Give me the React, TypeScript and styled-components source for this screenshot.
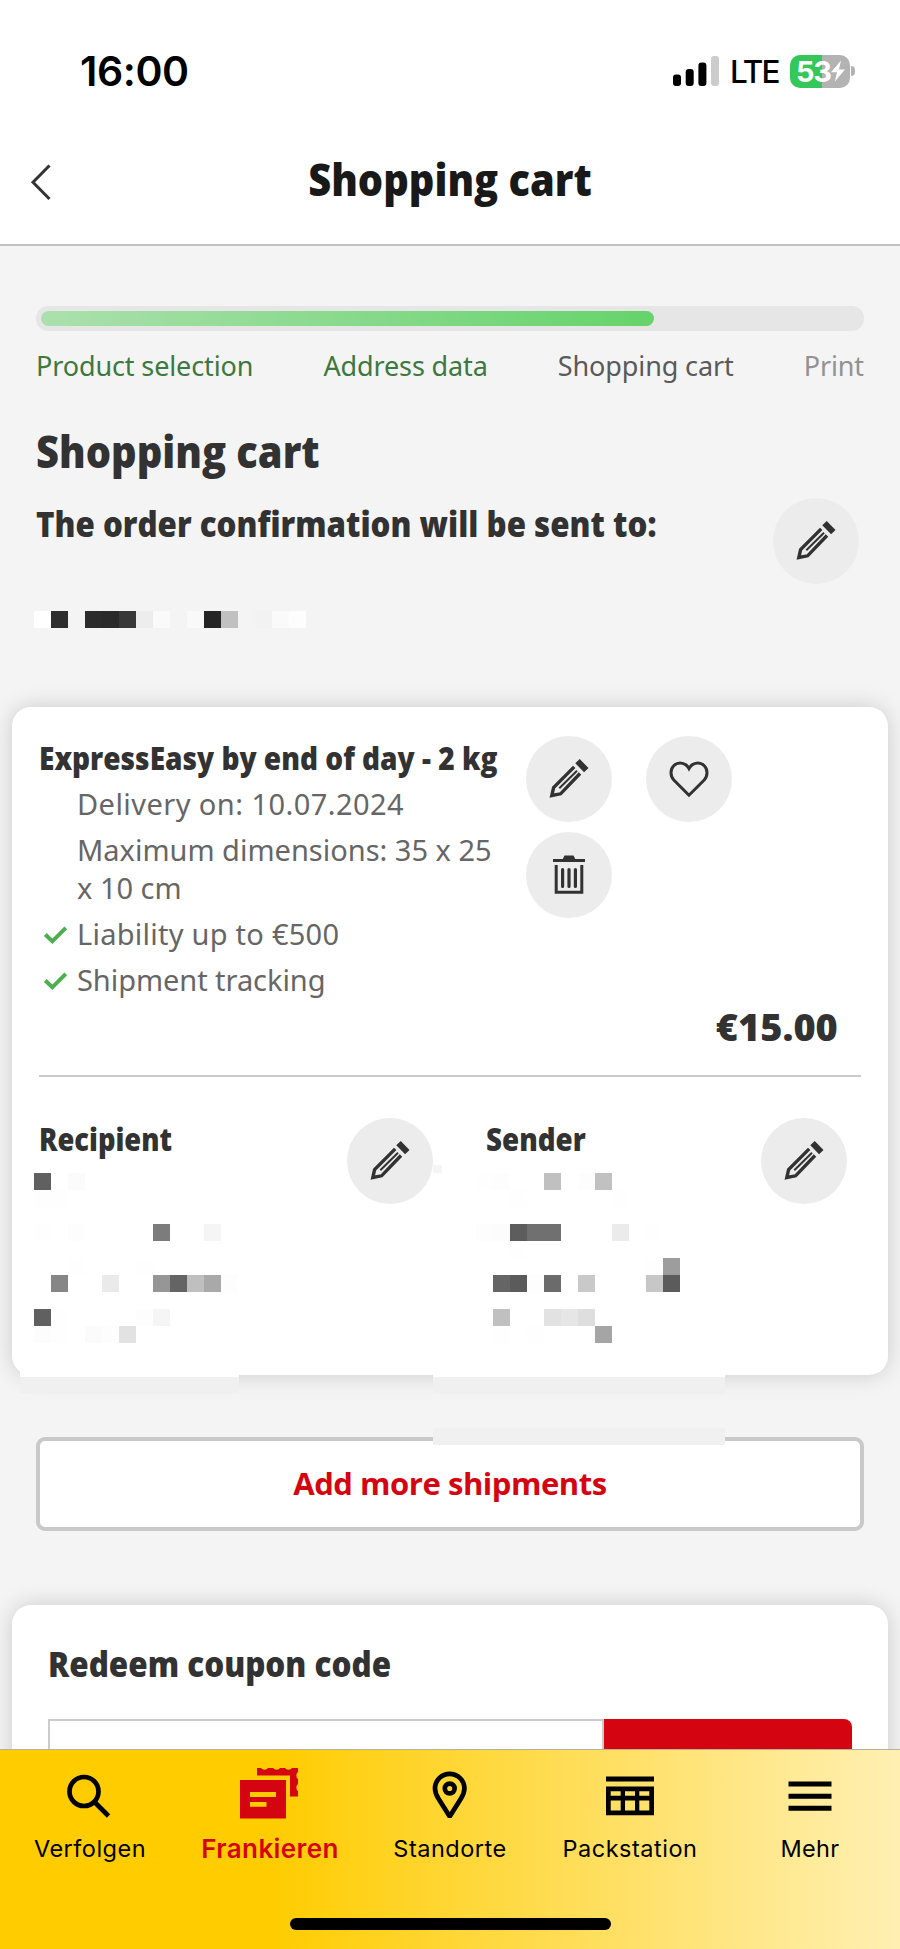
import React from 'react';
import styled, { createGlobalStyle } from 'styled-components';

const GlobalStyle = createGlobalStyle`
  * { box-sizing: border-box; }
  body { margin: 0; background: #f4f4f4; }
  h1, h2, h3, p, ul { margin: 0; padding: 0; }
  button { border: 0; padding: 0; font: inherit; cursor: pointer; }
`;

const ink = '#323232';
const red = '#d40511';

const Page = styled.div`
  display: flex;
  flex-direction: column;
  width: 900px;
  height: 1949px;
  overflow: hidden;
  background: #f4f4f4;
  color: ${ink};
  font-family: 'Noto Sans', 'Open Sans', sans-serif;
`;

const Header = styled.header`
  flex: none;
  background: #fff;
  border-bottom: 2px solid #c2c2c2;
`;

const StatusBar = styled.div`
  display: flex;
  justify-content: space-between;
  height: 120px;
  padding: 47px 45px 0 80px;
  color: #000;
  font-family: Inter, sans-serif;
`;

const Clock = styled.span`
  font-size: 41px;
  font-weight: 600;
  line-height: 48px;
  letter-spacing: -0.4px;
`;

const StatusIcons = styled.div`
  display: flex;
  align-items: center;
  height: 48px;
`;

const Network = styled.span`
  width: 49px;
  margin: 2px 11px 0 10px;
  font-size: 31.5px;
  font-weight: 500;
  line-height: 40px;
  letter-spacing: -2px;
`;

const Battery = styled.div`
  display: flex;
  align-items: center;
  width: 60px;
  height: 33px;
  padding-left: 6px;
  border-radius: 10px;
  background: linear-gradient(90deg, #34c759 0 32px, #b3b3b3 32px);
  color: #fff;
  font-size: 29px;
  font-weight: 700;
  letter-spacing: -1.4px;
`;

const BatteryTip = styled.i`
  width: 4px;
  height: 10px;
  margin-left: 1px;
  border-radius: 0 5px 5px 0;
  background: #b3b3b3;
`;

const TitleBar = styled.div`
  display: grid;
  grid-template-columns: 80px 1fr 80px;
  align-items: center;
  height: 124px;
`;

const BackButton = styled.button`
  display: flex;
  width: 80px;
  padding-left: 28px;
  background: none;
`;

const Heading = styled.h2<{ $size: number; $line: number; $condense?: number }>`
  font-family: 'Open Sans', 'Noto Sans', sans-serif;
  font-size: ${p => p.$size}px;
  font-weight: 800;
  line-height: ${p => p.$line}px;
  white-space: nowrap;
  transform: scaleX(${p => p.$condense ?? 0.885});
  transform-origin: left center;
`;

const ScreenTitle = styled(Heading)`
  padding-bottom: 6px;
  color: #191919;
  text-align: center;
  transform-origin: center;
`;

const Main = styled.main`
  flex: 1;
  min-height: 0;
  overflow: hidden;
  padding: 60px 12px 0;
`;

const Section = styled.section`
  padding: 0 24px;
`;

const ProgressTrack = styled.div`
  height: 25px;
  padding: 5px;
  border-radius: 12px;
  background: #e6e6e6;
`;

const ProgressFill = styled.div`
  width: 613px;
  height: 15px;
  border-radius: 8px;
  background: linear-gradient(90deg, #abe0ad, #66d36b);
`;

const Steps = styled.div`
  display: flex;
  justify-content: space-between;
  margin-top: 17px;
  font-size: 27px;
  line-height: 36px;
`;

const Step = styled.span<{ $state: 'done' | 'current' | 'next' }>`
  color: ${p => ({ done: '#3c7840', current: '#5a5a5a', next: '#929292' })[p.$state]};
  letter-spacing: -0.12px;
`;

const PageTitle = styled(Heading)`
  margin-top: 40px;
`;

const Confirmation = styled.div`
  display: flex;
  justify-content: space-between;
  margin-top: 20px;
  padding-right: 5px;
`;

const RoundButton = styled.button`
  display: grid;
  place-items: center;
  flex: none;
  width: 86px;
  height: 86px;
  border-radius: 50%;
  background: #ececec;
  color: ${ink};
`;

const MosaicGrid = styled.div<{ $left: number; $top: number }>`
  display: grid;
  grid-auto-rows: 17px;
  margin: ${p => p.$top}px 0 0 ${p => p.$left}px;
`;

const MosaicRow = styled.div`
  display: flex;
`;

const MosaicCell = styled.span<{ $tone: string }>`
  width: 17px;
  height: 17px;
  background: ${p => p.$tone};
`;

const Card = styled.section<{ $height: number; $top: number; $padding: string }>`
  position: relative;
  height: ${p => p.$height}px;
  margin-top: ${p => p.$top}px;
  padding: ${p => p.$padding};
  border-radius: 19px;
  background: #fff;
  box-shadow: 0 0 22px rgba(0, 0, 0, 0.17);
`;

const Product = styled.div`
  display: grid;
  grid-template-columns: 487px 1fr;
  height: 266px;
`;

const Features = styled.ul`
  display: flex;
  flex-direction: column;
  gap: 7.6px;
  width: 460px;
  margin-top: 5px;
  color: #666;
  font-size: 29px;
  line-height: 38.4px;
  list-style: none;
`;

const Feature = styled.li<{ $spacing: number }>`
  display: flex;
  padding-left: 4px;
  letter-spacing: ${p => p.$spacing}px;
`;

const FeatureMark = styled.span`
  display: flex;
  flex: none;
  width: 34px;
  padding-top: 8px;
`;

const Actions = styled.div`
  display: grid;
  grid-template-columns: 86px 86px;
  align-content: start;
  gap: 10px 34px;
`;

const Price = styled(Heading)`
  padding-right: 23px;
  text-align: right;
  transform-origin: right center;
`;

const Divider = styled.hr`
  height: 2px;
  margin: 23px 0 41px;
  border: 0;
  background: #cacaca;
`;

const Addresses = styled.div`
  display: grid;
  grid-template-columns: 447px 1fr;
`;

const Address = styled.div<{ $width: number }>`
  display: flex;
  justify-content: space-between;
  width: ${p => p.$width}px;
`;

const Patch = styled.i<{ $x: number; $y: number; $w: number; $h: number; $tone: string }>`
  position: absolute;
  left: ${p => p.$x}px;
  top: ${p => p.$y}px;
  width: ${p => p.$w}px;
  height: ${p => p.$h}px;
  background: ${p => p.$tone};
  z-index: 1;
`;

const AddButton = styled.button`
  display: block;
  width: 828px;
  height: 94px;
  margin: 62px 24px 0;
  padding-bottom: 3px;
  border: 4.5px solid #c9c9c9;
  border-radius: 9px;
  background: #fff;
  color: ${red};
  font-family: 'Open Sans', 'Noto Sans', sans-serif;
  font-size: 31px;
  font-weight: 700;
  letter-spacing: -0.45px;
`;

const CouponForm = styled.div`
  display: flex;
  height: 90px;
  margin-top: 32px;
`;

const CouponInput = styled.div`
  width: 556px;
  border: 2px solid #cbcbcb;
  background: #fff;
`;

const CouponSubmit = styled.button`
  width: 248px;
  border-radius: 0 8px 8px 0;
  background: ${red};
`;

const NavBar = styled.nav`
  display: flex;
  flex-direction: column;
  align-items: center;
  flex: none;
  height: 200px;
  border-top: 1px solid #b9b098;
  background: linear-gradient(90deg, #fc0 0%, #fc0 30%, #ffe57f 79%, #fff0b2 100%);
  font-family: Inter, sans-serif;
  z-index: 2;
`;

const Tabs = styled.div`
  display: grid;
  grid-template-columns: repeat(5, 180px);
  height: 168px;
`;

const Tab = styled.div<{ $active?: boolean }>`
  display: flex;
  flex-direction: column;
  align-items: center;
  padding-top: 12px;
  color: ${p => (p.$active ? red : '#000')};
`;

const TabLabel = styled.span<{ $active?: boolean; $spacing: number }>`
  margin-top: 16px;
  font-size: ${p => (p.$active ? 26 : 23.5)}px;
  font-weight: ${p => (p.$active ? 600 : 400)};
  line-height: 30px;
  letter-spacing: ${p => p.$spacing}px;
`;

const HomeIndicator = styled.div`
  width: 321px;
  height: 12px;
  border-radius: 6px;
  background: #000;
`;

const PencilIcon = () => (
  <svg width="40" height="40" viewBox="0 0 40 40" fill="none" stroke="currentColor">
    <path d="M25.2 7.900 4.600 28.600 2.800 36.500 11.600 34.800 31 14.500" strokeWidth="3.400" />
    <path d="M28 11.700 10.300 29.300" strokeWidth="2" />
    <path d="M28.500 2.200 37.300 11.200" strokeWidth="6.200" />
  </svg>
);

const HeartIcon = () => (
  <svg width="40" height="40" viewBox="0 0 40 40" fill="none" stroke="currentColor" strokeWidth="3">
    <path d="M20 36.200 4.800 21C2.300 18.500 2 16 2 13.500 2 8 6.300 4 11 4c4 0 7 2 9 5.600C22 6 25 4 29 4c4.700 0 9 4 9 9.500 0 2.500-.3 5-2.800 7.500Z" />
  </svg>
);

const TrashIcon = () => (
  <svg width="34" height="40" viewBox="0 0 34 40" fill="none" stroke="currentColor">
    <path d="M1 5.500H33" strokeWidth="3" />
    <path d="M10.500 4.500 12.500.500h9l2 4Z" fill="currentColor" stroke="none" />
    <path d="M4.200 10V37.200H29.800V10" strokeWidth="3" />
    <path d="M10.600 14.500V31.500M17 14.500V31.500M23.400 14.500V31.500" strokeWidth="3.200" strokeLinecap="round" />
  </svg>
);

const CheckIcon = () => (
  <svg width="26" height="24" viewBox="0 0 26 24" fill="none" stroke="#4caf50" strokeWidth="4">
    <path d="M2.300 11.500 9.300 18.300 22.800 4.800" />
  </svg>
);

const BackIcon = () => (
  <svg width="24" height="40" viewBox="0 0 24 40" fill="none" stroke={ink} strokeWidth="3">
    <path d="M21.500 3.500 5 20.200 21.500 37" />
  </svg>
);

const SignalIcon = () => (
  <svg width="48" height="32" viewBox="0 0 48 32">
    <rect x="1" y="19.500" width="8" height="11.500" rx="3" />
    <rect x="13.700" y="14" width="8" height="17" rx="3" />
    <rect x="26.400" y="7.500" width="8" height="23.500" rx="3" />
    <rect x="39" y="1" width="8" height="30" rx="3" fill="#ccc" />
  </svg>
);

const BoltIcon = () => (
  <svg width="16" height="22" viewBox="0 0 16 22" fill="#fff">
    <path d="M11 .5 1 12.300h6L4.800 21.500 15 9.500H9Z" />
  </svg>
);

const SearchIcon = () => (
  <svg width="48" height="56" viewBox="0 0 48 56" fill="none" stroke="currentColor" strokeWidth="4.700">
    <circle cx="18" cy="29.500" r="14.500" />
    <path d="m28.500 40 14 14" />
  </svg>
);

const FrankingIcon = () => (
  <svg width="60" height="56" viewBox="0 0 60 56" fill="currentColor" overflow="visible">
    <path d="M0 18h46v38.500H0zM10 30v5h26v-5zM10 40v4.800h16.500V40z" fillRule="evenodd" />
    <path d="M17 6h4a4 3.200 0 0 0 7 0h5a4 3.200 0 0 0 7 0h5a4 3.200 0 0 0 7 0h6v4a3.200 4 0 0 0 0 7v5a3.200 4 0 0 0 0 7v5.500h-8V13.500H17Z" />
  </svg>
);

const PinIcon = () => (
  <svg width="48" height="56" viewBox="0 0 48 56" fill="none" stroke="currentColor" strokeWidth="4.700">
    <path d="M23.700 54.500 12.400 36.500C10 32.600 9 30 9 26.500a14.700 14.700 0 0 1 29.400 0c0 3.500-1 6.100-3.400 10Z" />
    <circle cx="23.700" cy="26.500" r="4.900" />
  </svg>
);

const LockerIcon = () => (
  <svg width="50" height="56" viewBox="0 0 50 56" fill="currentColor">
    <path d="M1 14.500h48v5H1z" />
    <path d="M1 24.500h48v28.800H1zM5.700 29.200v4.600h10v-4.600zM20 29.200v4.600h10v-4.600zM34.300 29.200v4.600h10v-4.600zM5.700 38.500v10h10v-10zM20 38.500v10h10v-10zM34.300 38.500v10h10v-10z" fillRule="evenodd" />
  </svg>
);

const MenuIcon = () => (
  <svg width="44" height="56" viewBox="0 0 44 56" fill="currentColor">
    <path d="M.5 19.500h43v5H.5zM.5 31.700h43v5H.5zM.5 43.800h43v5H.5z" />
  </svg>
);

type Cells = Record<number, string>;

const Mosaic = ({ rows, cols, left, top }: { rows: Cells[]; cols: number; left: number; top: number }) => (
  <MosaicGrid $left={left} $top={top} aria-hidden>
    {rows.map((row, y) => (
      <MosaicRow key={y}>
        {Array.from({ length: cols }, (_, x) => (
          <MosaicCell key={x} $tone={row[x] ?? 'transparent'} />
        ))}
      </MosaicRow>
    ))}
  </MosaicGrid>
);

const emailCells: Cells[] = [
  {
    0: '#fff', 1: '#2e2e2e', 3: '#2c2c2c', 4: '#2a2a2a', 5: '#383838', 6: '#ededed', 7: '#fafafa',
    9: '#f9f9f9', 10: '#252525', 11: '#c0c0c0', 13: '#f2f2f2', 14: '#fafafa', 15: '#fdfdfd',
  },
];

const recipientCells: Cells[] = [
  { 0: '#606060', 2: '#fbfbfb' },
  { 0: '#fefefe', 1: '#fefefe' },
  {},
  { 0: '#fefefe', 2: '#fdfdfd', 7: '#7c7c7c', 10: '#f5f5f5' },
  {},
  { 2: '#fefefe', 6: '#fefefe' },
  { 1: '#868686', 4: '#eaeaea', 7: '#969696', 8: '#646464', 9: '#bfbfbf', 10: '#a9a9a9', 11: '#fdfdfd' },
  {},
  { 0: '#606060', 1: '#fefefe', 6: '#fdfdfd', 7: '#f5f5f5' },
  { 0: '#fcfcfc', 1: '#fefefe', 3: '#fbfbfb', 4: '#fdfdfd', 5: '#e2e2e2' },
];

const senderCells: Cells[] = [
  { 0: '#fefefe', 1: '#fdfdfd', 4: '#c0c0c0', 6: '#fdfdfd', 7: '#c1c1c1' },
  { 2: '#fefefe', 8: '#fefefe' },
  {},
  { 0: '#fdfdfd', 1: '#fcfcfc', 2: '#5d5d5d', 3: '#707070', 4: '#707070', 8: '#ebebeb', 10: '#fefefe' },
  { 2: '#fefefe' },
  { 10: '#fefefe', 11: '#9d9d9d' },
  { 1: '#656565', 2: '#5b5b5b', 3: '#fdfdfd', 4: '#6b6b6b', 6: '#c9c9c9', 10: '#c7c7c7', 11: '#5b5b5b' },
  {},
  { 1: '#c0c0c0', 4: '#e2e2e2', 5: '#e6e6e6', 6: '#dedede' },
  { 1: '#fefefe', 3: '#fefefe', 7: '#a5a5a5' },
];

const features = [
  { text: 'Delivery on: 10.07.2024', spacing: 0.44 },
  { text: 'Maximum dimensions: 35 x 25 x 10 cm', spacing: 0 },
  { text: 'Liability up to €500', spacing: 0.25, included: true },
  { text: 'Shipment tracking', spacing: -0.05, included: true },
];

const tabs = [
  { label: 'Verfolgen', icon: <SearchIcon />, spacing: 0.5 },
  { label: 'Frankieren', icon: <FrankingIcon />, spacing: 0.4, active: true },
  { label: 'Standorte', icon: <PinIcon />, spacing: 0.5 },
  { label: 'Packstation', icon: <LockerIcon />, spacing: 0.5 },
  { label: 'Mehr', icon: <MenuIcon />, spacing: 0.3 },
];

export default function App() {
  return (
    <Page>
      <GlobalStyle />
      <Header>
        <StatusBar>
          <Clock>16:00</Clock>
          <StatusIcons>
            <SignalIcon />
            <Network>LTE</Network>
            <Battery>
              53
              <BoltIcon />
            </Battery>
            <BatteryTip />
          </StatusIcons>
        </StatusBar>
        <TitleBar>
          <BackButton aria-label="Back">
            <BackIcon />
          </BackButton>
          <ScreenTitle as="h1" $size={45} $line={54}>Shopping cart</ScreenTitle>
        </TitleBar>
      </Header>

      <Main>
        <Section>
          <ProgressTrack>
            <ProgressFill />
          </ProgressTrack>
          <Steps>
            <Step $state="done">Product selection</Step>
            <Step $state="done">Address data</Step>
            <Step $state="current">Shopping cart</Step>
            <Step $state="next">Print</Step>
          </Steps>
          <PageTitle $size={45} $line={54}>Shopping cart</PageTitle>
          <Confirmation>
            <Heading as="h3" $size={35.5} $line={50} $condense={0.881}>The order confirmation will be sent to:</Heading>
            <RoundButton aria-label="Edit e-mail"><PencilIcon /></RoundButton>
          </Confirmation>
          <Mosaic rows={emailCells} cols={16} left={-2} top={27} />
        </Section>

        <Card $height={668} $top={79} $padding="29px 27px 0">
          <Product>
            <div>
              <Heading as="h3" $size={31} $line={44} $condense={0.905}>ExpressEasy by end of day - 2 kg</Heading>
              <Features>
                {features.map(f => (
                  <Feature key={f.text} $spacing={f.spacing}>
                    <FeatureMark>{f.included && <CheckIcon />}</FeatureMark>
                    <span>{f.text}</span>
                  </Feature>
                ))}
              </Features>
            </div>
            <Actions>
              <RoundButton aria-label="Edit"><PencilIcon /></RoundButton>
              <RoundButton aria-label="Favourite"><HeartIcon /></RoundButton>
              <RoundButton aria-label="Delete"><TrashIcon /></RoundButton>
            </Actions>
          </Product>
          <Price as="p" $size={37.5} $line={50} $condense={1.01}>€15.00</Price>
          <Divider />
          <Addresses>
            <div>
              <Address $width={394}>
                <Heading as="h3" $size={31} $line={43} $condense={0.88}>Recipient</Heading>
                <RoundButton aria-label="Edit recipient"><PencilIcon /></RoundButton>
              </Address>
              <Mosaic rows={recipientCells} cols={12} left={-5} top={-31} />
            </div>
            <div>
              <Address $width={361}>
                <Heading as="h3" $size={31} $line={43} $condense={0.895}>Sender</Heading>
                <RoundButton aria-label="Edit sender"><PencilIcon /></RoundButton>
              </Address>
              <Mosaic rows={senderCells} cols={12} left={-10} top={-31} />
            </div>
          </Addresses>
          <Patch $x={421} $y={458} $w={9} $h={8} $tone="#f5f5f5" />
          <Patch $x={8} $y={654} $w={219} $h={16} $tone="#fff" />
          <Patch $x={8} $y={670} $w={219} $h={17} $tone="#f0f0f0" />
          <Patch $x={421} $y={654} $w={292} $h={16} $tone="#fff" />
          <Patch $x={421} $y={670} $w={292} $h={17} $tone="#f0f0f0" />
          <Patch $x={421} $y={721} $w={292} $h={17} $tone="#f0f0f0" />
        </Card>

        <AddButton>Add more shipments</AddButton>

        <Card $height={300} $top={74} $padding="36px 36px 0">
          <Heading $size={34.5} $line={46} $condense={0.91}>Redeem coupon code</Heading>
          <CouponForm>
            <CouponInput />
            <CouponSubmit aria-label="Redeem" />
          </CouponForm>
        </Card>
      </Main>

      <NavBar>
        <Tabs>
          {tabs.map(t => (
            <Tab key={t.label} $active={t.active}>
              {t.icon}
              <TabLabel $active={t.active} $spacing={t.spacing}>{t.label}</TabLabel>
            </Tab>
          ))}
        </Tabs>
        <HomeIndicator />
      </NavBar>
    </Page>
  );
}
